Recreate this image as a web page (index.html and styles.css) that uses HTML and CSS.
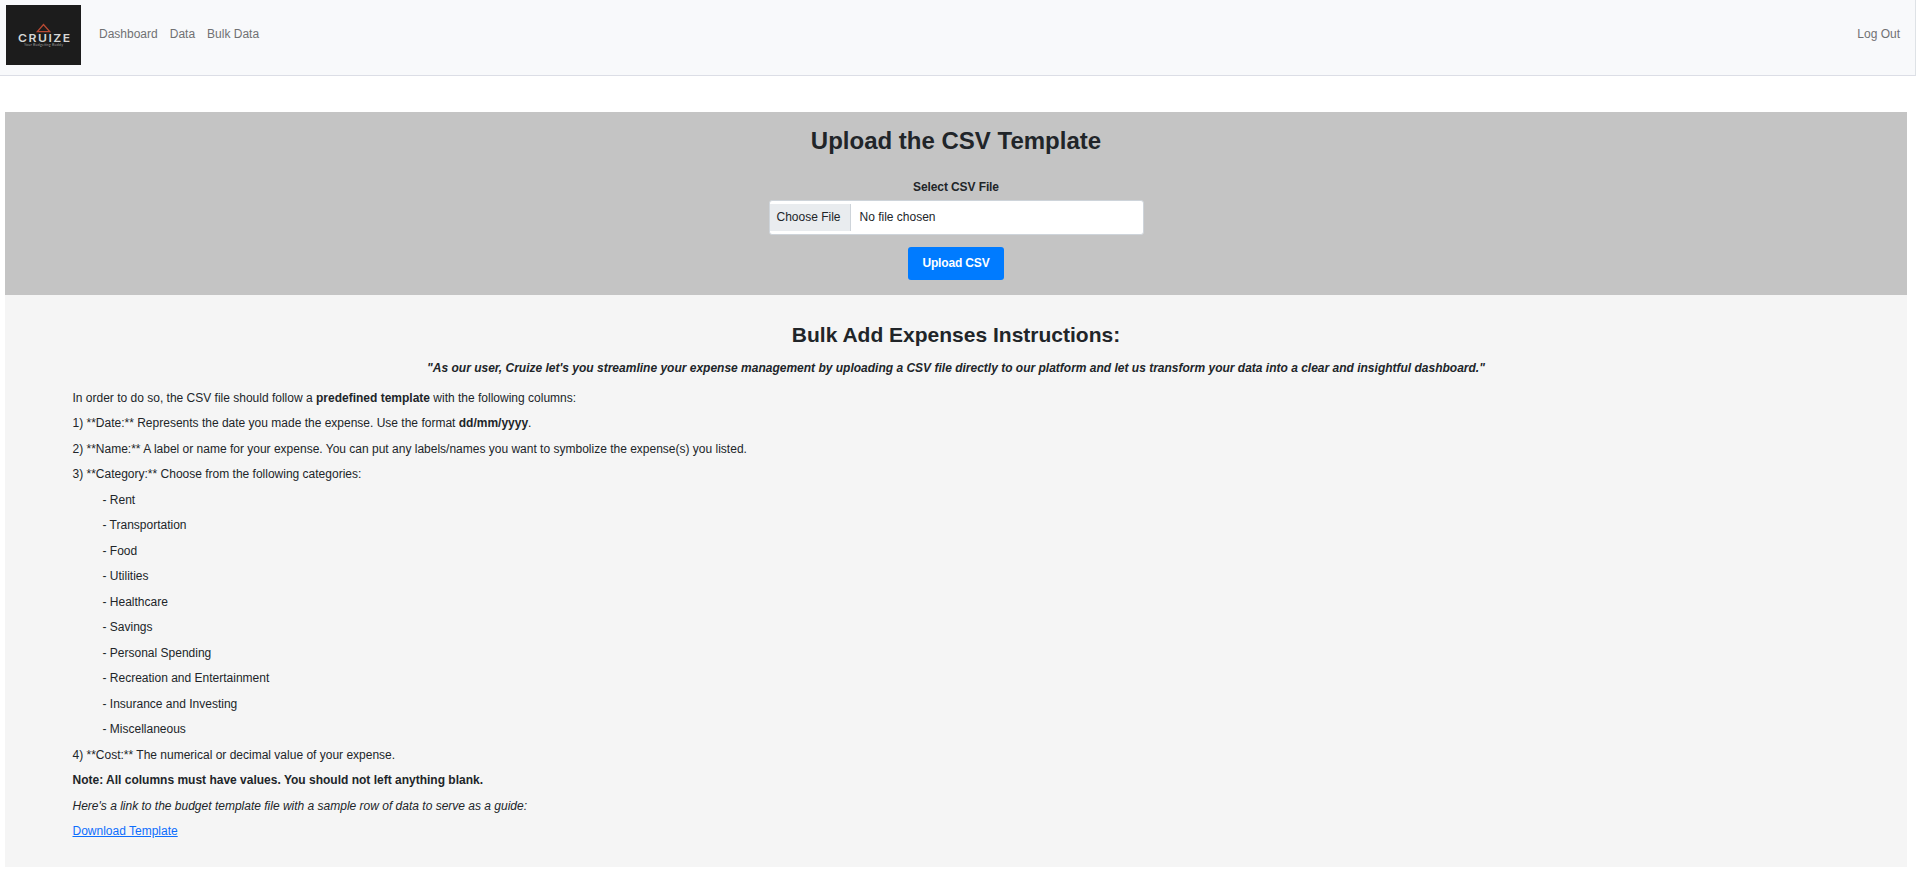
FILE: index.html
```html
<!DOCTYPE html>
<html lang="en">
<head>
<meta charset="utf-8">
<title>Cruize - Bulk Data</title>
<link rel="stylesheet" href="styles.css">
</head>
<body>
<nav class="navbar">
  <svg class="logo" viewBox="0 0 75 60" role="img" aria-label="Cruize">
    <rect width="75" height="60" fill="#1c1c1c"/>
    <path d="M31.3 26.7 37.5 19.5 43.7 26.7Z" fill="none" stroke="#b94a33" stroke-width="1.3"/>
    <text transform="translate(12 36.7) scale(1.16 1)" textLength="45" lengthAdjust="spacing" class="logo-name">CRUIZE</text>
    <text x="18" y="41.2" textLength="39" class="logo-tag">Your Budgeting Buddy</text>
  </svg>
  <a class="nav-link">Dashboard</a>
  <a class="nav-link">Data</a>
  <a class="nav-link">Bulk Data</a>
  <a class="nav-link logout">Log Out</a>
</nav>
<main class="page">
  <section class="upload">
    <h1 class="upload-title">Upload the CSV Template</h1>
    <form class="upload-form">
      <label class="file-label">Select CSV File</label>
      <div class="file-input"><span class="file-button">Choose File</span><span class="file-name">No file chosen</span></div>
      <button class="submit" type="button">Upload CSV</button>
    </form>
  </section>
  <section class="instructions">
    <h2 class="instructions-title">Bulk Add Expenses Instructions:</h2>
    <p class="quote">"As our user, Cruize let's you streamline your expense management by uploading a CSV file directly to our platform and let us transform your data into a clear and insightful dashboard."</p>
    <p class="line">In order to do so, the CSV file should follow a <b>predefined template</b> with the following columns:</p>
    <p class="line">1) **Date:** Represents the date you made the expense. Use the format <b>dd/mm/yyyy</b>.</p>
    <p class="line">2) **Name:** A label or name for your expense. You can put any labels/names you want to symbolize the expense(s) you listed.</p>
    <p class="line">3) **Category:** Choose from the following categories:</p>
    <p class="line category">- Rent</p>
    <p class="line category">- Transportation</p>
    <p class="line category">- Food</p>
    <p class="line category">- Utilities</p>
    <p class="line category">- Healthcare</p>
    <p class="line category">- Savings</p>
    <p class="line category">- Personal Spending</p>
    <p class="line category">- Recreation and Entertainment</p>
    <p class="line category">- Insurance and Investing</p>
    <p class="line category">- Miscellaneous</p>
    <p class="line">4) **Cost:** The numerical or decimal value of your expense.</p>
    <p class="line"><b>Note: All columns must have values. You should not left anything blank.</b></p>
    <p class="line"><i>Here's a link to the budget template file with a sample row of data to serve as a guide:</i></p>
    <p class="line"><a class="download" href="#">Download Template</a></p>
  </section>
</main>
</body>
</html>
```
FILE: styles.css
```css
* { box-sizing: border-box; }
body {
  margin: 0;
  background: #fff;
  color: #212529;
  font: 12px/19.1px "Liberation Sans", Arial, sans-serif;
}
h1, h2, p { margin: 0; }
.navbar {
  display: flex;
  align-items: flex-start;
  height: 76px;
  padding: 5px 9px 0 6px;
  background: #f8f9fb;
  border-right: 1px solid #dee2e6;
  border-bottom: 1px solid #dcdee6;
}
.logo { width: 75px; height: 60px; margin-right: 12px; }
.logo-name { font: 600 10.5px Inter, sans-serif; fill: #d6d6d6; }
.logo-tag { font: 3.6px Lato, sans-serif; fill: #999; }
.nav-link { padding: 20px 6px 0; color: #707173; }
.logout { margin-left: auto; }
.page { margin: 36px 9px 0 5px; }
.upload { height: 183px; padding-top: 13px; background: #c4c4c4; text-align: center; }
.upload-title { font-size: 24px; line-height: 32px; }
.upload-form { display: flex; flex-direction: column; align-items: center; }
.file-label { margin-top: 21px; font-weight: bold; letter-spacing: -0.1px; }
.file-input {
  display: flex;
  align-items: center;
  width: 375px;
  height: 35px;
  margin-top: 2.9px;
  background: #fff;
  border: 1px solid #ced4da;
  border-radius: 3px;
}
.file-button {
  height: 27px;
  width: 81px;
  padding-right: 2px;
  line-height: 27px;
  background: #e9ecef;
  border-right: 1px solid #ced4da;
}
.file-name { margin-left: 9px; padding-top: 1px; }
.submit {
  width: 96px;
  height: 33px;
  margin-top: 12px;
  padding: 0 0 1px;
  background: #007bff;
  border: 0;
  border-radius: 3px;
  color: #fff;
  font: bold 12px "Liberation Sans", Arial, sans-serif;
  letter-spacing: -0.15px;
}
.instructions { height: 572px; padding: 27px 67.5px 0; background: #f5f5f5; }
.instructions-title { font-size: 21px; line-height: 26px; text-align: center; }
.quote { margin: 11px 0 10.8px; font-weight: bold; font-style: italic; text-align: center; }
.line { margin-bottom: 6.4px; }
.category { padding-left: 30px; }
.download { color: #0d6efd; }
```
